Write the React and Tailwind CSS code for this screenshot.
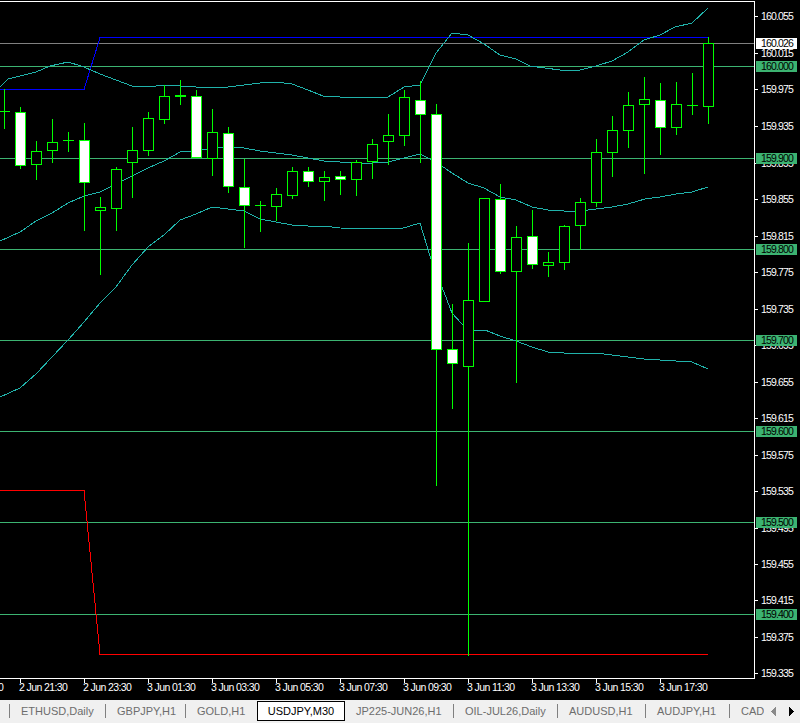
const FONT = { fontFamily: '"Liberation Sans", Arial, sans-serif' };

// x, high, low, bodyTop, bodyBottom, filled
const candles = [
  [4, 89, 128, 111, 111, 0],
  [20, 107, 168, 112, 165, 1],
  [36, 141, 179, 151, 164, 0],
  [52, 119, 162, 142, 150, 0],
  [68, 132, 151, 140, 140, 0],
  [84, 123, 230, 140, 182, 1],
  [100, 197, 274, 207, 210, 0],
  [116, 167, 230, 169, 208, 0],
  [132, 127, 197, 150, 162, 0],
  [148, 112, 155, 118, 150, 0],
  [164, 85, 123, 96, 119, 0],
  [180, 80, 104, 95, 96, 1],
  [196, 90, 157, 96, 157, 1],
  [212, 109, 175, 132, 158, 0],
  [228, 127, 192, 133, 186, 1],
  [244, 159, 247, 187, 205, 1],
  [260, 201, 231, 205, 205, 0],
  [276, 188, 220, 194, 206, 0],
  [292, 167, 198, 171, 195, 0],
  [308, 167, 186, 171, 181, 1],
  [324, 171, 200, 177, 181, 0],
  [340, 171, 194, 176, 179, 1],
  [356, 160, 195, 162, 179, 0],
  [372, 139, 178, 144, 161, 0],
  [388, 114, 164, 135, 141, 0],
  [404, 90, 145, 97, 135, 0],
  [420, 81, 162, 100, 114, 1],
  [436, 104, 485, 114, 349, 1],
  [452, 304, 408, 349, 363, 1],
  [468, 243, 655, 300, 366, 0],
  [484, 198, 301, 198, 301, 0],
  [500, 184, 273, 199, 271, 1],
  [516, 226, 382, 237, 271, 0],
  [532, 210, 268, 236, 264, 1],
  [548, 252, 276, 262, 265, 0],
  [564, 225, 269, 226, 262, 0],
  [580, 198, 249, 202, 225, 0],
  [596, 139, 206, 152, 202, 0],
  [612, 116, 176, 130, 152, 0],
  [628, 92, 147, 105, 130, 0],
  [644, 77, 173, 99, 104, 0],
  [660, 83, 154, 100, 127, 1],
  [676, 82, 134, 104, 127, 0],
  [692, 73, 114, 105, 105, 0],
  [708, 37, 123, 43, 106, 0],
];

const upperBand = '0,87 8,79 36,72 50,66 68,62 84,67 100,74 116,80 132,86 148,87 164,85 196,87 212,88 228,87 244,85 260,83 276,82 292,84 308,90 323,96 356,98 388,97 404,87 420,85 436,53 452,33 468,35 484,44 500,55 516,59 530,66 560,70 580,70 596,66 612,61 628,52 644,40 660,35 675,27 692,23 708,8';
const middleBand = '0,241 20,232 36,221 52,213 68,203 84,196 100,192 116,184 132,176 148,168 164,161 180,152 196,151 212,148 228,147 244,148 260,151 276,153 292,155 308,158 324,161 340,162 356,163 372,163 388,162 404,158 420,154 436,162 452,173 468,183 484,188 500,197 516,200 532,207 548,210 564,211 580,211 596,209 612,207 628,204 645,199 660,197 676,194 692,192 708,187';
const lowerBand = '0,397 20,388 36,374 52,357 68,340 84,322 100,303 116,287 132,265 148,247 164,235 180,220 196,214 212,207 228,209 244,211 260,219 276,222 292,225 308,226 324,226 340,228 400,229 420,223 430,256 442,287 452,313 462,324 474,330 485,330 500,336 516,341 532,347 548,352 564,353 596,353 612,355 644,359 660,360 692,362 708,369';

const levels = [
  [66, '160.000'],
  [158, '159.900'],
  [249, '159.800'],
  [340, '159.700'],
  [431, '159.600'],
  [522, '159.500'],
  [614, '159.400'],
];

const prices = [
  [16, '160.055'], [53, '160.015'], [89, '159.975'], [126, '159.935'], [163, '159.895'],
  [199, '159.855'], [236, '159.815'], [272, '159.775'], [309, '159.735'], [345, '159.695'],
  [382, '159.655'], [418, '159.615'], [455, '159.575'], [491, '159.535'], [528, '159.495'],
  [564, '159.455'], [600, '159.415'], [637, '159.375'], [673, '159.335'],
];

const times = [
  [-44, '2 Jun 19:30'], [20, '2 Jun 21:30'], [84, '2 Jun 23:30'], [148, '3 Jun 01:30'],
  [212, '3 Jun 03:30'], [276, '3 Jun 05:30'], [340, '3 Jun 07:30'], [404, '3 Jun 09:30'],
  [468, '3 Jun 11:30'], [532, '3 Jun 13:30'], [596, '3 Jun 15:30'], [660, '3 Jun 17:30'],
];

const tabs = [
  { label: 'ETHUSD,Daily', w: 'w-[96px]' },
  { label: 'GBPJPY,H1', w: 'w-[80px]' },
  { label: 'GOLD,H1', w: 'w-[72px]' },
  { label: 'USDJPY,M30', w: 'w-[88px]', active: true },
  { label: 'JP225-JUN26,H1', w: 'w-[108px]', noDivider: true },
  { label: 'OIL-JUL26,Daily', w: 'w-[104px]' },
  { label: 'AUDUSD,H1', w: 'w-[88px]' },
  { label: 'AUDJPY,H1', w: 'w-[84px]' },
  { label: 'CAD.', w: 'w-[35px]' },
];

function Candle({ c }) {
  const [x, high, low, top, bottom, filled] = c;
  const cx = x + 0.5;
  if (top === bottom) {
    return (
      <g stroke="#00ff00">
        <line x1={cx} x2={cx} y1={high} y2={low + 1} />
        <line x1={x - 5} x2={x + 6} y1={top + 0.5} y2={top + 0.5} />
      </g>
    );
  }
  return (
    <g stroke="#00ff00">
      <line x1={cx} x2={cx} y1={high} y2={low + 1} />
      <rect x={x - 4.5} y={top + 0.5} width={10} height={bottom - top} fill={filled ? '#ffffff' : '#000000'} />
    </g>
  );
}

function PriceChart() {
  return (
    <svg width="800" height="700" className="block" shapeRendering="crispEdges" style={FONT}>
      <rect width="800" height="700" fill="#000000" />

      {levels.map(([y]) => (
        <line key={y} x1="0" x2="754" y1={y + 0.5} y2={y + 0.5} stroke="#3cb371" />
      ))}
      <line x1="0" x2="754" y1="43.5" y2="43.5" stroke="#808080" />
      <polyline points="0,89.5 84,89.5 100,37.5 708,37.5" fill="none" stroke="#0000ff" />
      <polyline points="0,490.5 84,490.5 100,654.5 708,654.5" fill="none" stroke="#ff0000" />

      <g fill="none" stroke="#20b2aa">
        <polyline points={upperBand} />
        <polyline points={middleBand} />
        <polyline points={lowerBand} />
      </g>

      {candles.map((c) => (
        <Candle key={c[0]} c={c} />
      ))}

      {/* frame */}
      <polyline points="0,1.5 754.5,1.5 754.5,678.5 0,678.5" fill="none" stroke="#ffffff" />

      {/* price scale */}
      <g fontSize="10.5" letterSpacing="-0.85" fill="#ffffff" shapeRendering="auto">
        {prices.map(([y, t]) => (
          <g key={t}>
            <line x1="755" x2="758" y1={y + 0.5} y2={y + 0.5} stroke="#ffffff" shapeRendering="crispEdges" />
            <text x="761" y={y + 4}>{t}</text>
          </g>
        ))}
      </g>

      {/* time scale */}
      <g fontSize="10.5" letterSpacing="-0.6" fill="#ffffff" shapeRendering="auto">
        {times.map(([x, t]) => (
          <g key={t}>
            <line x1={x + 0.5} x2={x + 0.5} y1="679" y2="683" stroke="#ffffff" shapeRendering="crispEdges" />
            <text x={x - 1} y="691">{t}</text>
          </g>
        ))}
      </g>

      {/* line labels */}
      <g fontSize="10.5" letterSpacing="-0.85" shapeRendering="auto">
        {levels.map(([y, t]) => (
          <g key={t}>
            <rect x="756" y={y - 5} width="41" height="11" fill="#3cb371" shapeRendering="crispEdges" />
            <text x="761" y={y + 4} fill="#000000">{t}</text>
          </g>
        ))}
        <rect x="756" y="38" width="41" height="11" fill="#ffffff" shapeRendering="crispEdges" />
        <text x="761" y="47" fill="#000000">160.026</text>
      </g>
    </svg>
  );
}

function TabBar() {
  return (
    <div className="flex h-[23px] w-[800px] bg-[#f0f0f0] pt-[1px] overflow-hidden" style={FONT}>
      <div className="w-[9px] shrink-0" />
      {tabs.map((tab) =>
        tab.active ? (
          <div
            key={tab.label}
            className="shrink-0 h-[20px] w-[88px] bg-white border border-black flex items-center justify-center text-[11px] text-black"
          >
            {tab.label}
          </div>
        ) : (
          <div key={tab.label} className={`shrink-0 h-[20px] flex items-center ${tab.w}`}>
            <div
              className={`h-[14px] w-full flex items-center pl-[11px] text-[11px] text-[#6d6d6d] whitespace-nowrap overflow-hidden ${tab.noDivider ? '' : 'border-l border-[#808080]'}`}
            >
              {tab.label}
            </div>
          </div>
        )
      )}
      <div className="flex-1 h-[20px] flex items-center gap-[13px] pl-[7px]">
        <svg width="5" height="9" viewBox="0 0 5 9" shapeRendering="crispEdges">
          <path d="M5 0v9L0 4.5z" fill="#8a8a8a" />
        </svg>
        <svg width="5" height="9" viewBox="0 0 5 9" shapeRendering="crispEdges">
          <path d="M0 0v9l5-4.5z" fill="#000000" />
        </svg>
      </div>
    </div>
  );
}

export default function App() {
  return (
    <div className="w-[800px] h-[723px] flex flex-col overflow-hidden bg-black">
      <PriceChart />
      <TabBar />
    </div>
  );
}
